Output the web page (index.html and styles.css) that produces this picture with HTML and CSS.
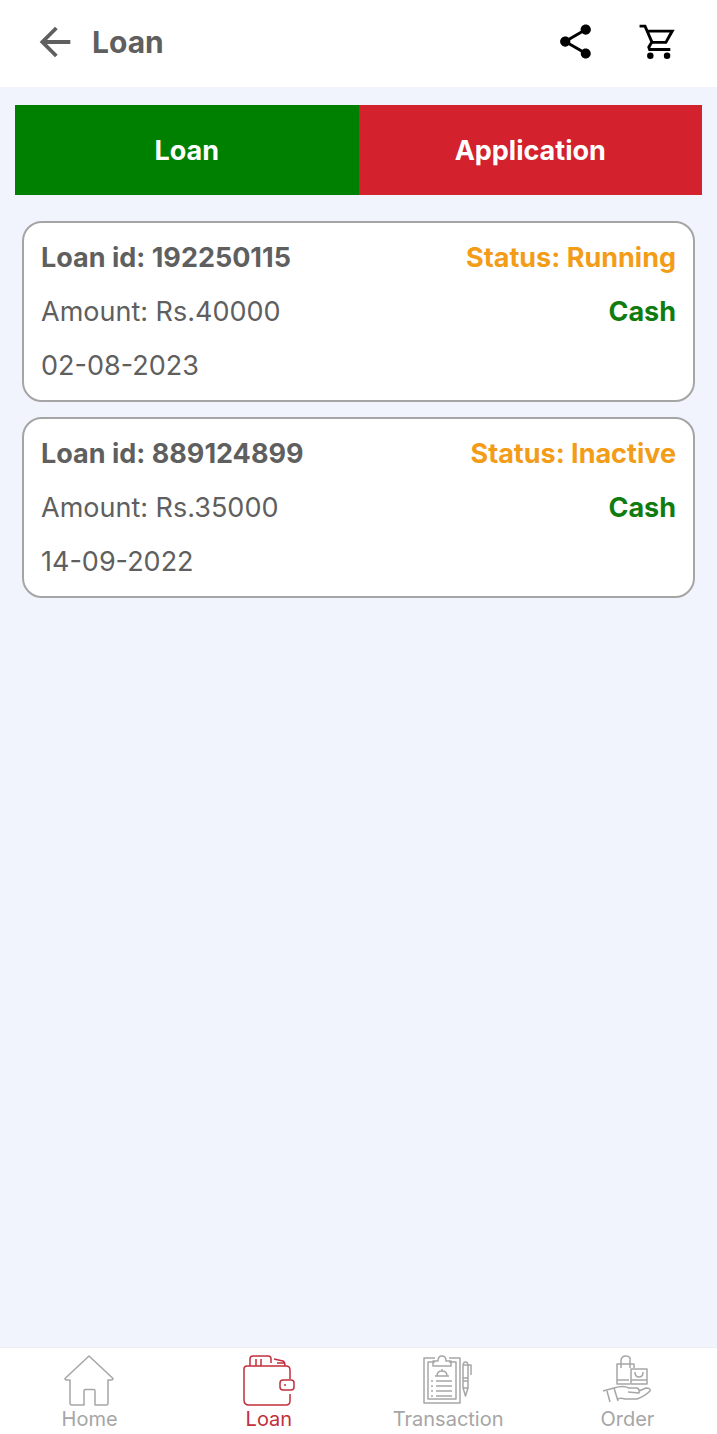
FILE: index.html
```html
<!DOCTYPE html>
<html lang="en">
<head>
    <meta charset="UTF-8">
    <meta name="viewport" content="width=device-width, initial-scale=1.0">
    <title>Loan</title>
    <link rel="stylesheet" href="styles.css">
</head>
<body>
    <header class="header">
        <button class="icon-button" type="button" aria-label="Back">
            <svg class="icon-back" viewBox="0 0 24 24"><path d="M20 11H7.83l5.59-5.59L12 4l-8 8 8 8 1.41-1.41L7.83 13H20v-2z"/></svg>
        </button>
        <h1 class="title">Loan</h1>
        <div class="header-actions">
            <button class="icon-button" type="button" aria-label="Share">
                <svg class="icon-action" viewBox="0 0 24 24"><path d="M18 16.08c-.76 0-1.44.3-1.96.77L8.91 12.7c.05-.23.09-.46.09-.7s-.04-.47-.09-.7l7.05-4.11c.54.5 1.25.81 2.04.81 1.66 0 3-1.34 3-3s-1.34-3-3-3-3 1.34-3 3c0 .24.04.47.09.7L8.04 9.81C7.5 9.31 6.79 9 6 9c-1.66 0-3 1.34-3 3s1.34 3 3 3c.79 0 1.5-.31 2.04-.81l7.12 4.16c-.05.21-.08.43-.08.65 0 1.61 1.31 2.92 2.92 2.92 1.61 0 2.92-1.31 2.92-2.92s-1.31-2.92-2.92-2.92z"/></svg>
            </button>
            <button class="icon-button" type="button" aria-label="Cart">
                <svg class="icon-action" viewBox="0 0 24 24">
                    <path d="M1.500 3H4.700L8.800 12.500H16.900L20.600 5.900H6" fill="none" stroke="#000" stroke-width="1.700"/>
                    <path d="M8.600 12.500L6.900 15.300L7.400 16.700H19.500" fill="none" stroke="#000" stroke-width="1.700"/>
                    <circle cx="7.800" cy="20.300" r="1.900"/>
                    <circle cx="17.600" cy="20.300" r="1.900"/>
                </svg>
            </button>
        </div>
    </header>

    <main class="content">
        <div class="tabs">
            <button class="tab tab-loan" type="button">Loan</button>
            <button class="tab tab-application" type="button">Application</button>
        </div>

        <div class="loan-list">
            <article class="loan-card">
                <div class="loan-row">
                    <h2 class="loan-id">Loan id: 192250115</h2>
                    <span class="loan-status">Status: Running</span>
                </div>
                <div class="loan-row">
                    <span>Amount: Rs.40000</span>
                    <span class="loan-type">Cash</span>
                </div>
                <div class="loan-row">
                    <span>02-08-2023</span>
                </div>
            </article>
            <article class="loan-card">
                <div class="loan-row">
                    <h2 class="loan-id">Loan id: 889124899</h2>
                    <span class="loan-status">Status: Inactive</span>
                </div>
                <div class="loan-row">
                    <span>Amount: Rs.35000</span>
                    <span class="loan-type">Cash</span>
                </div>
                <div class="loan-row">
                    <span>14-09-2022</span>
                </div>
            </article>
        </div>
    </main>

    <nav class="bottom-nav">
        <a class="nav-item" href="#home">
            <svg class="nav-icon" viewBox="0 0 52 52">
                <path d="M25 2L49 24.500Q49 26 47 26H44V49Q44 51 42 51H31V37Q31 35.500 29.500 35.500H21.500Q20 35.500 20 37V51H8Q6 51 6 49V26H3Q1 26 1 24.500Z"/>
            </svg>
            Home
        </a>
        <a class="nav-item active" href="#loan">
            <svg class="nav-icon" viewBox="0 0 52 52">
                <path d="M47 25V16Q47 12 43 12H4Q1 12 1 15V46Q1 51 6 51H43Q47 51 47 47V40"/>
                <path d="M7 12V5Q7 2 10 2H25Q28 2 28 5V9M13 5V12M18 5V12M31 5L40 7Q42 8 42 12M34 9H41"/>
                <rect x="37" y="26" width="14" height="10" rx="3"/>
                <path d="M41 31H43"/>
            </svg>
            Loan
        </a>
        <a class="nav-item" href="#transaction">
            <svg class="nav-icon" viewBox="0 0 52 52">
                <path d="M13 4H2V49H38V4H27M13 8H6V45H34V8H27"/>
                <path d="M11 7H16Q16 2 20 2T24 7H29V12H11ZM15 22Q15 17 20 17T25 22ZM20 15V17M13 22H27"/>
                <path d="M14 27H30M14 32H30M14 37H30M14 42H30M9 27H11M9 32H11M9 37H11M9 42H11"/>
                <path d="M41 34V12Q41 8 43.500 8T46 12V34L43.500 42ZM41 24H46M41 27H46M41 11H49V21M41 34H46"/>
            </svg>
            Transaction
        </a>
        <a class="nav-item" href="#order">
            <svg class="nav-icon" viewBox="0 0 52 52">
                <path d="M29 30H16V10H33V14M20 14V7Q20 2 25 2T29 7V14M16 26H28"/>
                <path d="M30 15H46V30H30ZM30 26H46M34 18Q34 23 38 23T42 18"/>
                <path d="M2 37L13 34L17 47M6 37L9 48M13 34Q22 31 28 34H36Q39 35 38 39L27 38M38 37L45 34Q50 34 49 37Q44 42 36 45H24Q18 43 16 46"/>
            </svg>
            Order
        </a>
    </nav>
</body>
</html>
```
FILE: styles.css
```css
* {
    box-sizing: border-box;
}

body {
    font-family: Inter, 'Open Sans', sans-serif;
    font-size: 27px;
    background-color: #f1f4fd;
    margin: 0;
    display: flex;
    flex-direction: column;
    min-height: 100vh;
    color: #5f5f5f;
}

.header {
    display: flex;
    align-items: center;
    height: 87px;
    padding: 0 39px 4px 32px;
    background-color: white;
}

.icon-button {
    display: flex;
    padding: 0;
    border: none;
    background: none;
    cursor: pointer;
}

.icon-back {
    width: 46px;
    height: 46px;
    fill: #5f5f5f;
}

.icon-action {
    width: 41px;
    height: 41px;
    fill: black;
}

.title {
    margin: 0 0 0 14px;
    font-size: 30px;
    font-weight: bold;
}

.header-actions {
    display: flex;
    gap: 41px;
    margin-left: auto;
}

.content {
    flex: 1;
    padding: 18px 15px;
}

.tabs {
    display: flex;
}

.tab {
    flex: 1;
    height: 90px;
    border: none;
    color: white;
    font: inherit;
    font-weight: bold;
    cursor: pointer;
}

.tab-loan {
    background-color: #008000;
}

.tab-application {
    background-color: #d3212e;
}

.loan-list {
    display: flex;
    flex-direction: column;
    gap: 15px;
    padding: 26px 7px;
}

.loan-card {
    padding: 7px 17px 8px;
    background-color: white;
    border: 2px solid #a5a5a5;
    border-radius: 20px;
}

.loan-row {
    display: flex;
    justify-content: space-between;
    align-items: center;
    height: 54px;
}

.loan-id {
    margin: 0;
    font-size: 27px;
    font-weight: bold;
}

.loan-status {
    color: #f39c18;
    font-weight: bold;
}

.loan-type {
    color: #107c10;
    font-weight: bold;
}

.bottom-nav {
    display: flex;
    height: 87px;
    padding-top: 6px;
    background-color: white;
    border-top: 1px solid #ebeef5;
}

.nav-item {
    flex: 1;
    display: flex;
    flex-direction: column;
    align-items: center;
    color: #a6a6a6;
    font-size: 20px;
    line-height: 26px;
    text-decoration: none;
}

.nav-item.active {
    color: #c22f3d;
}

.nav-icon {
    width: 52px;
    height: 52px;
    fill: none;
    stroke: currentColor;
    stroke-width: 1.5;
    stroke-linejoin: round;
}
```
